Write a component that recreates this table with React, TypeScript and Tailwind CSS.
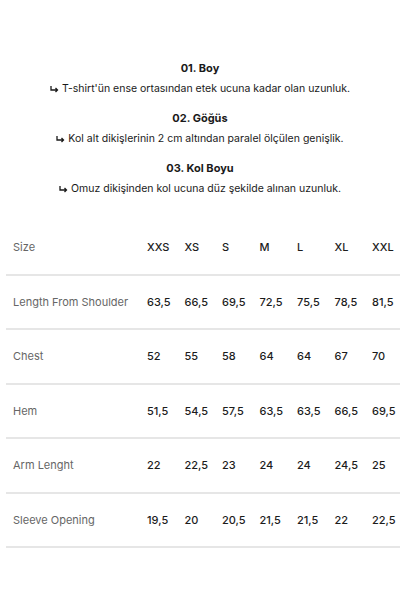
import React from 'react';

const sizes = ['XXS', 'XS', 'S', 'M', 'L', 'XL', 'XXL'];

const rows = [
  { label: 'Length From Shoulder', values: ['63,5', '66,5', '69,5', '72,5', '75,5', '78,5', '81,5'] },
  { label: 'Chest', values: ['52', '55', '58', '64', '64', '67', '70'] },
  { label: 'Hem', values: ['51,5', '54,5', '57,5', '63,5', '63,5', '66,5', '69,5'] },
  { label: 'Arm Lenght', values: ['22', '22,5', '23', '24', '24', '24,5', '25'] },
  { label: 'Sleeve Opening', values: ['19,5', '20', '20,5', '21,5', '21,5', '22', '22,5'] },
];

const notes = [
  { title: '01. Boy', text: "T-shirt'ün ense ortasından etek ucuna kadar olan uzunluk." },
  { title: '02. Göğüs', text: 'Kol alt dikişlerinin 2 cm altından paralel ölçülen genişlik.' },
  { title: '03. Kol Boyu', text: 'Omuz dikişinden kol ucuna düz şekilde alınan uzunluk.' },
];

const Row: React.FC<{ label: string; values: string[] }> = ({ label, values }) => (
  <div className="grid grid-cols-[141px_repeat(6,37.5px)_1fr] items-center h-[54.5px] ml-[6px] border-b-2 border-[#e6e6e6]">
    <span className="pl-[7px] text-[#666]">{label}</span>
    {values.map((v, i) => (
      <span key={i} className="text-[#1c1c1c] font-medium">
        {v}
      </span>
    ))}
  </div>
);

export default function App() {
  return (
    <div className="w-[400px] h-[600px] bg-white text-[11px] font-['Inter',sans-serif] text-[#1a1a1a]">
      <div className="pt-[59px] flex flex-col items-center">
        {notes.map((n) => (
          <div key={n.title} className="flex flex-col items-center mb-[11px]">
            <div className="font-bold h-[18px] leading-[18px]">{n.title}</div>
            <div className="mt-[3px] h-[18px] leading-[18px] text-[10.5px] flex items-center">
              {/* hook arrow */}
              <svg width="9" height="7" viewBox="0 0 9 7" className="mr-[3px]">
                <path d="M1 0v4h6.5M5.5 2l2 2-2 2" fill="none" stroke="#1a1a1a" strokeWidth="1.3" />
              </svg>
              {n.text}
            </div>
          </div>
        ))}
      </div>
      <div className="mt-[12px]">
        <Row label="Size" values={sizes} />
        {rows.map((r) => (
          <Row key={r.label} label={r.label} values={r.values} />
        ))}
      </div>
    </div>
  );
}
